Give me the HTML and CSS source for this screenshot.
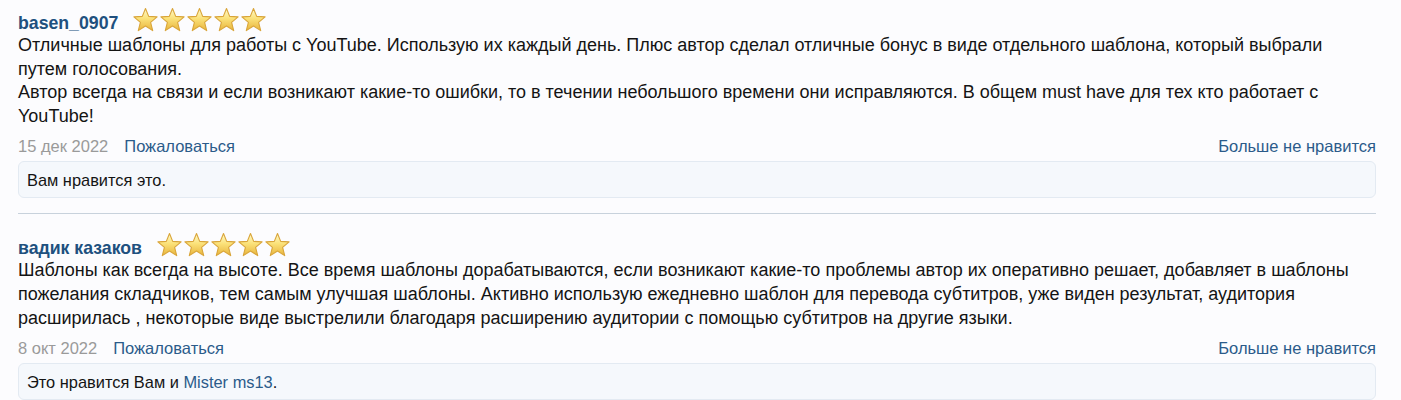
FILE: index.html
```html
<!DOCTYPE html>
<html lang="ru">
<head>
  <meta charset="UTF-8" />
  <meta name="viewport" content="width=device-width, initial-scale=1.0" />
  <title>Отзывы</title>
  <link rel="stylesheet" href="styles.css">
</head>
<body>
  <svg width="0" height="0" class="defs">
    <defs>
      <linearGradient id="starFill" x1="0" y1="0" x2="0" y2="1">
        <stop offset="0" stop-color="#fffbd0" />
        <stop offset="0.45" stop-color="#fbe27a" />
        <stop offset="1" stop-color="#e8b43c" />
      </linearGradient>
      <symbol id="star" viewBox="0 0 26 26">
        <polygon points="13,1.5 16.2,9.4 24.6,9.9 18.1,15.3 20.2,23.6 13,19 5.8,23.6 7.9,15.3 1.4,9.9 9.8,9.4"
                 fill="url(#starFill)" stroke="#d9a53a" stroke-width="1.1" stroke-linejoin="round" />
      </symbol>
    </defs>
  </svg>

  <main class="reviews">
    <article class="review">
      <div class="review-head">
        <a class="author" href="#">basen_0907</a>
        <span class="stars">
          <svg><use href="#star"/></svg><svg><use href="#star"/></svg><svg><use href="#star"/></svg><svg><use href="#star"/></svg><svg><use href="#star"/></svg>
        </span>
      </div>
      <div class="review-text">
        Отличные шаблоны для работы с YouTube. Использую их каждый день. Плюс автор сделал отличные бонус в виде отдельного шаблона, который выбрали<br>
        путем голосования.<br>
        Автор всегда на связи и если возникают какие-то ошибки, то в течении небольшого времени они исправляются. В общем must have для тех кто работает с YouTube!
      </div>
      <div class="review-meta">
        <span class="date">15 дек 2022</span>
        <a class="report" href="#">Пожаловаться</a>
        <a class="unlike" href="#">Больше не нравится</a>
      </div>
      <div class="likes">Вам нравится это.</div>
    </article>

    <article class="review">
      <div class="review-head">
        <a class="author" href="#">вадик казаков</a>
        <span class="stars">
          <svg><use href="#star"/></svg><svg><use href="#star"/></svg><svg><use href="#star"/></svg><svg><use href="#star"/></svg><svg><use href="#star"/></svg>
        </span>
      </div>
      <div class="review-text">
        Шаблоны как всегда на высоте. Все время шаблоны дорабатываются, если возникают какие-то проблемы автор их оперативно решает, добавляет в шаблоны пожелания складчиков, тем самым улучшая шаблоны. Активно использую ежедневно шаблон для перевода субтитров, уже виден результат, аудитория расширилась , некоторые виде выстрелили благодаря расширению аудитории с помощью субтитров на другие языки.
      </div>
      <div class="review-meta">
        <span class="date">8 окт 2022</span>
        <a class="report" href="#">Пожаловаться</a>
        <a class="unlike" href="#">Больше не нравится</a>
      </div>
      <div class="likes">Это нравится Вам и <a href="#">Mister ms13</a>.</div>
    </article>
  </main>
</body>
</html>
```

FILE: styles.css
```css
:root {
  --bg-color: #fcfcfe;
  --text-color: #141414;
  --name-color: #20507e;
  --link-color: #2b5b8a;
  --muted: #9a9a9a;
  --likes-bg: #f5f8fc;
  --likes-border: #e3eaf2;
  --divider: #c8d2dc;
}

body {
  margin: 0;
  background-color: var(--bg-color);
  color: var(--text-color);
  font-family: "Liberation Sans", Arial, sans-serif;
  font-size: 18px;
}

a {
  color: var(--link-color);
  text-decoration: none;
}

.defs {
  position: absolute;
}

.reviews {
  padding: 7px 25px 0 18px;
}

.review {
  padding-bottom: 15px;
  border-bottom: 1px solid var(--divider);
}
.review + .review {
  padding-top: 18px;
  border-bottom: none;
}

.review-head {
  display: flex;
  align-items: center;
  gap: 14px;
  height: 26px;
}
.author {
  color: var(--name-color);
  font-weight: bold;
  font-size: 17.7px;
  padding-top: 6px;
}
.stars {
  display: flex;
}
.stars svg {
  width: 27px;
  height: 26px;
}

.review-text {
  margin-top: 1px;
  line-height: 23.6px;
}

.review-meta {
  display: flex;
  align-items: center;
  margin-top: 8px;
  font-size: 16.5px;
  line-height: 20px;
}
.date {
  color: var(--muted);
  margin-right: 16px;
}
.unlike {
  margin-left: auto;
}

.likes {
  margin-top: 5px;
  padding: 8px 8px 7px;
  line-height: 20px;
  font-size: 16.4px;
  background-color: var(--likes-bg);
  border: 1px solid var(--likes-border);
  border-radius: 6px;
}
```
